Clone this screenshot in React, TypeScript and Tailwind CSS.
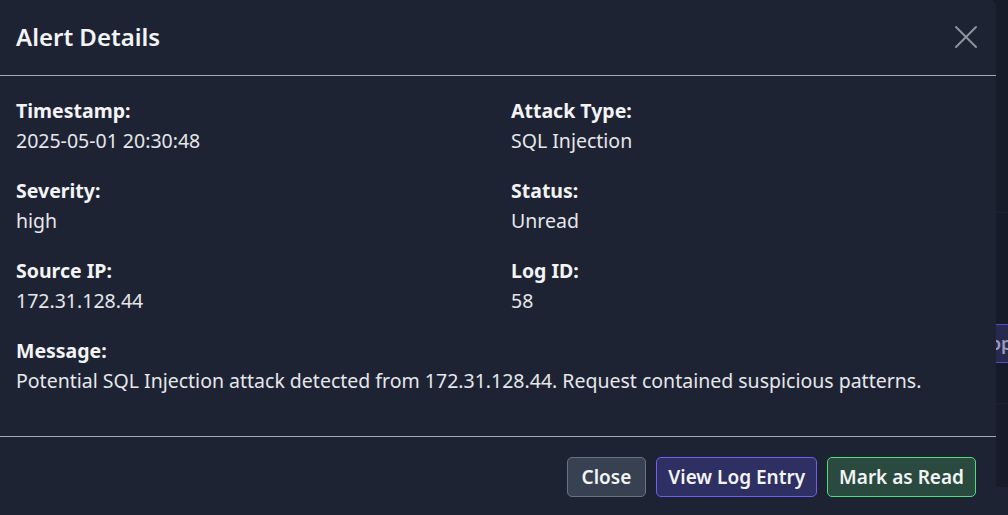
import { X } from "lucide-react";

// Alert detail modal, shown over the alerts table

const fields: { label: string; value: string }[] = [
  { label: "Timestamp:", value: "2025-05-01 20:30:48" },
  { label: "Attack Type:", value: "SQL Injection" },
  { label: "Severity:", value: "high" },
  { label: "Status:", value: "Unread" },
  { label: "Source IP:", value: "172.31.128.44" },
  { label: "Log ID:", value: "58" },
];

function Field({ label, value }: { label: string; value: string }) {
  return (
    <div className="mb-5">
      <div className="text-[19.5px] leading-[30px] font-bold text-[#f3f4f6]">{label}</div>
      <div className="text-[19.5px] leading-[30px] text-[#e5e7eb]">{value}</div>
    </div>
  );
}

export default function App() {
  return (
    <div
      className="flex h-[515px] w-[1008px] overflow-hidden bg-[#161b28]"
      style={{ fontFamily: '"Noto Sans", sans-serif' }}
    >
      {/* Modal */}
      <div className="flex w-[996px] shrink-0 flex-col rounded-tr-md bg-[#1e2333]">
        <div className="flex h-[76px] items-center justify-between border-b border-[#a3aab8] pl-4 pr-[10px] pb-[2px]">
          <h2 className="text-[24px] font-semibold text-[#f3f4f6]">Alert Details</h2>
          <X className="h-10 w-10 text-[#8e939e]" strokeWidth={1.2} />
        </div>

        <div className="border-b border-[#a3aab8] px-4 pt-5 pb-5">
          <div className="grid grid-cols-2 gap-x-[26px]">
            {fields.map((f) => (
              <Field key={f.label} label={f.label} value={f.value} />
            ))}
          </div>
          <Field
            label="Message:"
            value="Potential SQL Injection attack detected from 172.31.128.44. Request contained suspicious patterns."
          />
        </div>

        <div className="flex justify-end gap-[10px] px-5 pt-5">
          <button className="h-10 rounded-[5px] border border-[#6b7280] bg-[#374151] px-[14px] text-[19px] font-semibold text-[#f3f4f6]">
            Close
          </button>
          <button className="h-10 rounded-[5px] border border-[#6d5ff0] bg-[#2e2f62] px-[11px] text-[19px] font-semibold text-[#f3f4f6]">
            View Log Entry
          </button>
          <button className="h-10 rounded-[5px] border border-[#4ade80] bg-[#2a4a3f] px-[11px] text-[19px] font-semibold text-[#f3f4f6]">
            Mark as Read
          </button>
        </div>
      </div>

      {/* Page behind the modal */}
      <div className="flex flex-1 flex-col">
        <div className="h-[212px] bg-[#171c2a]" />
        <div className="h-[112px] border-t border-[#1f2433] bg-[#161b28]" />
        <div className="flex h-[39px] items-center overflow-hidden border-y border-[#5549d6] bg-[#262a4f] text-[18px] font-semibold text-[#9a9cb8]">
          <span className="-ml-[6px]">op</span>
        </div>
        <div className="h-[40px] bg-[#161b28]" />
        <div className="h-[84px] border-t border-[#1f2433] bg-[#171c28]" />
        <div className="flex-1 bg-[#1e2333]" />
      </div>
    </div>
  );
}
